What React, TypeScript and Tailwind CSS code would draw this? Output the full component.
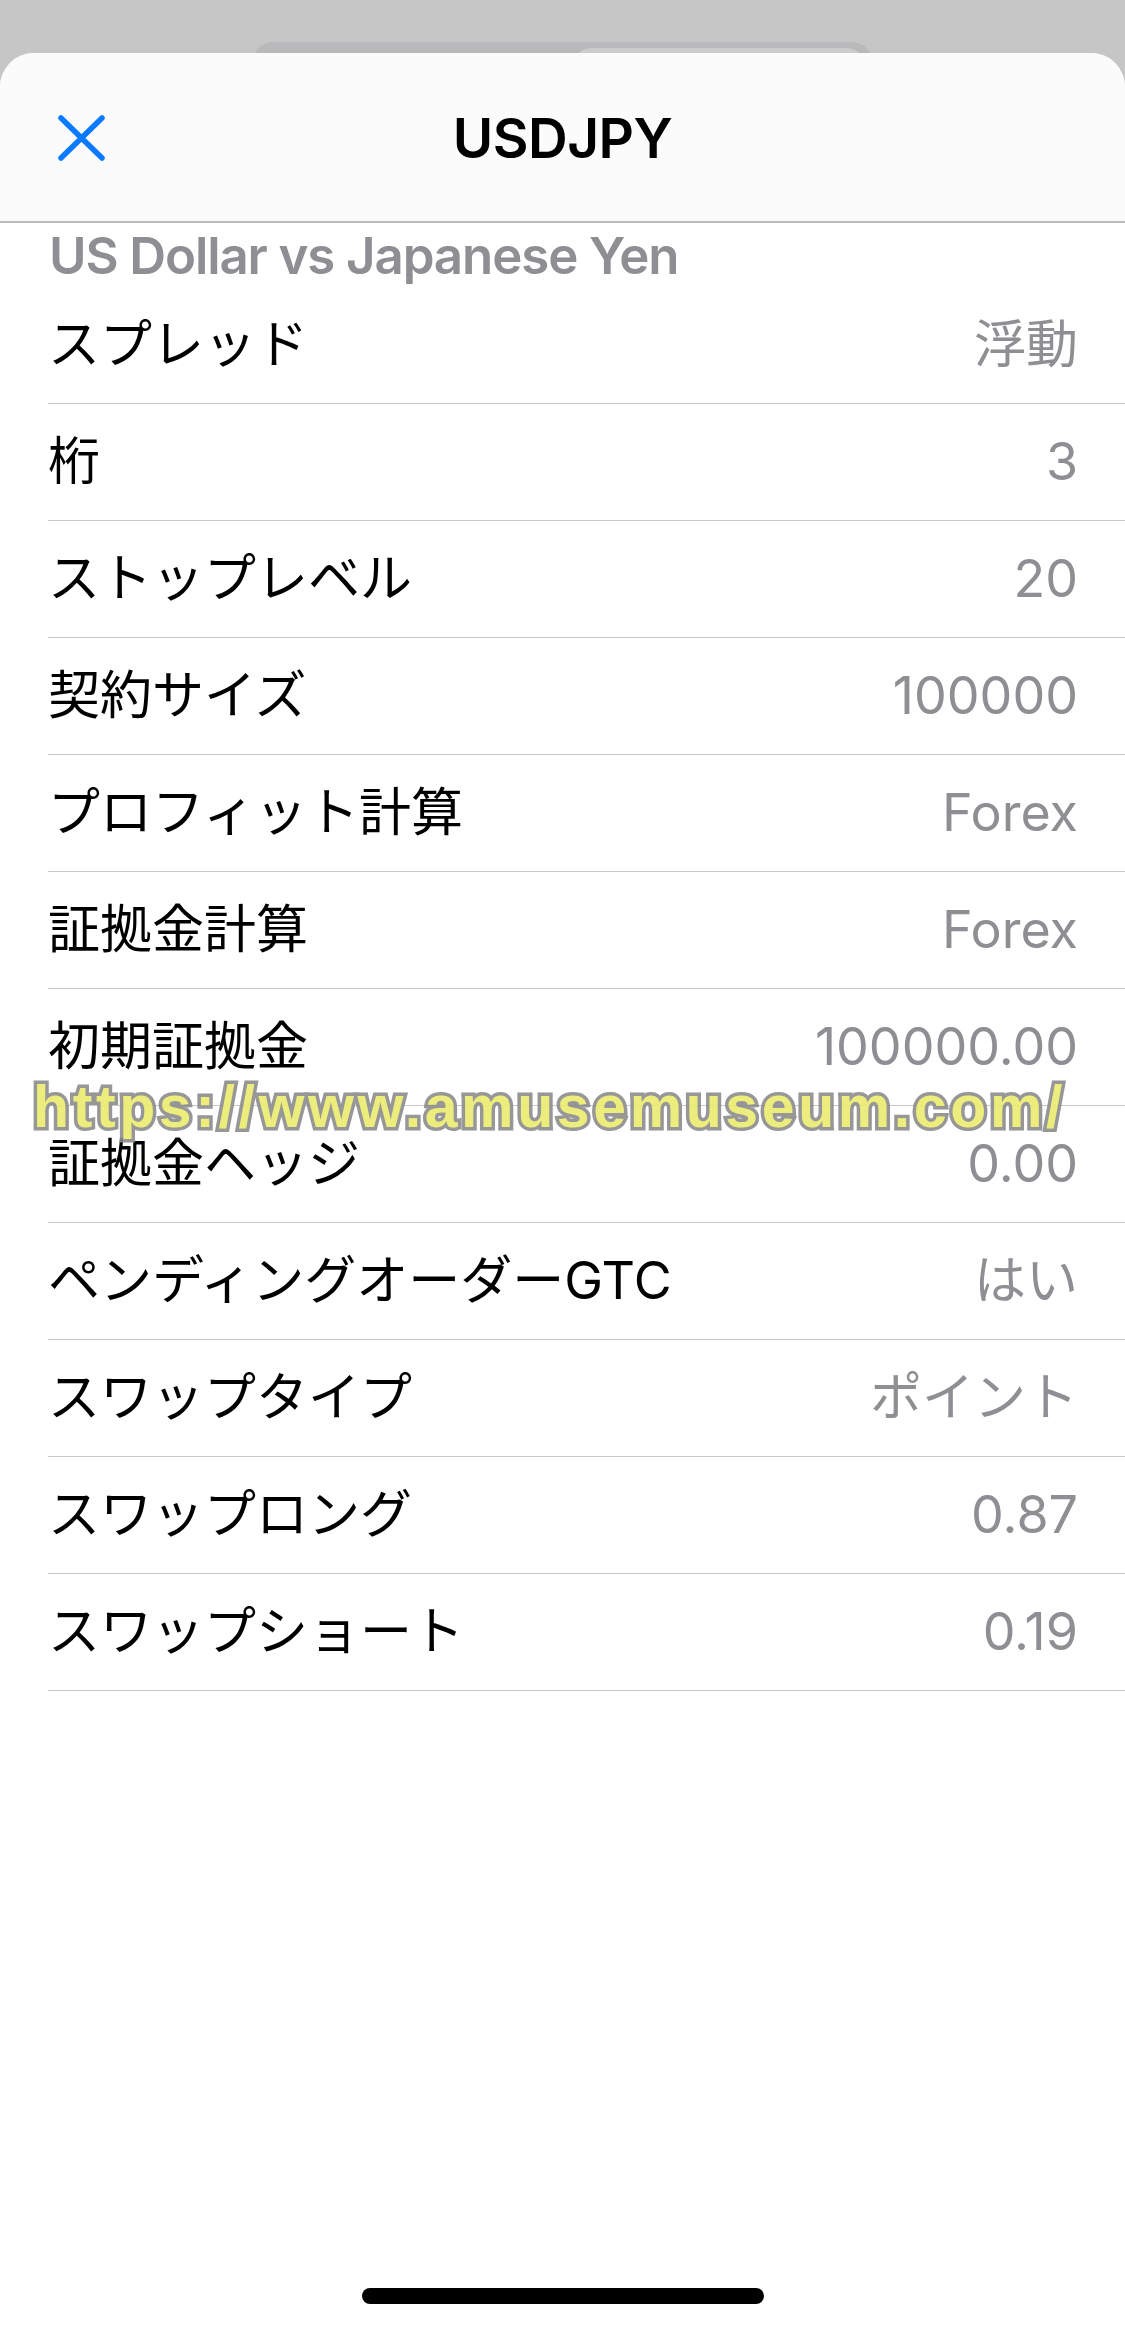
import React from "react";

const rows: [string, string][] = [
  ["スプレッド", "浮動"],
  ["桁", "3"],
  ["ストップレベル", "20"],
  ["契約サイズ", "100000"],
  ["プロフィット計算", "Forex"],
  ["証拠金計算", "Forex"],
  ["初期証拠金", "100000.00"],
  ["証拠金ヘッジ", "0.00"],
  ["ペンディングオーダーGTC", "はい"],
  ["スワップタイプ", "ポイント"],
  ["スワップロング", "0.87"],
  ["スワップショート", "0.19"],
];

export default function App() {
  return (
    <div
      className="relative flex h-[2328px] w-[1125px] flex-col overflow-hidden bg-[#c6c6c6]"
      style={{ fontFamily: '"Inter", "Noto Sans CJK JP", sans-serif' }}
    >
      {/* background segmented control peeking behind sheet */}
      <div className="h-[53px] shrink-0 overflow-hidden pl-[253px] pt-[42px]">
        <div className="relative h-[40px] w-[619px] rounded-[22px] bg-[#b9b9bb]">
          <div className="absolute left-[321px] top-[6px] h-[34px] w-[290px] rounded-[18px] bg-[#cbcbcd]" />
        </div>
      </div>

      {/* sheet */}
      <div className="relative flex flex-1 flex-col overflow-hidden rounded-t-[34px] bg-white">
        <div className="grid h-[170px] shrink-0 grid-cols-[1fr_auto_1fr] items-center border-b-2 border-[#b9b9bb] bg-[#fbfbfc] pt-[2px]">
          <div className="pl-[58px]">
            <svg width="47" height="46" viewBox="0 0 47 46" fill="none">
              <path d="M3 3L44 43M44 3L3 43" stroke="#0a7aff" strokeWidth="5.5" strokeLinecap="round" />
            </svg>
          </div>
          <div className="text-[55px] font-semibold leading-none tracking-[-0.5px] text-black">USDJPY</div>
          <div />
        </div>

        <div className="h-[64px] shrink-0 pl-[49px] pt-[7px] text-[51px] font-semibold leading-[51px] tracking-[-1.1px] text-[#8e8e93]">
          US Dollar vs Japanese Yen
        </div>

        <div className="flex flex-col pl-[48px]">
          {rows.map(([label, value]) => (
            <div
              key={label}
              className="flex h-[117px] items-center justify-between border-b-[1.5px] border-[#c8c8cc] pr-[47px]"
            >
              <span className="text-[52px] leading-none text-black">{label}</span>
              <span className="text-[52px] leading-none text-[#8e8e93]">{value}</span>
            </div>
          ))}
        </div>

        {/* home indicator */}
        <div className="absolute bottom-[24px] left-[362px] h-[16px] w-[402px] rounded-full bg-black" />
      </div>

      {/* watermark overlay */}
      <div
        className="pointer-events-none absolute left-[33px] top-[1063px] text-[59px] font-bold tracking-[3.6px] text-[#ecec70] opacity-90 [paint-order:stroke_fill] [-webkit-text-stroke:7px_#8c8c8c]"
        style={{ fontFamily: '"Liberation Sans", sans-serif' }}
      >
        https://www.amusemuseum.com/
      </div>
    </div>
  );
}
